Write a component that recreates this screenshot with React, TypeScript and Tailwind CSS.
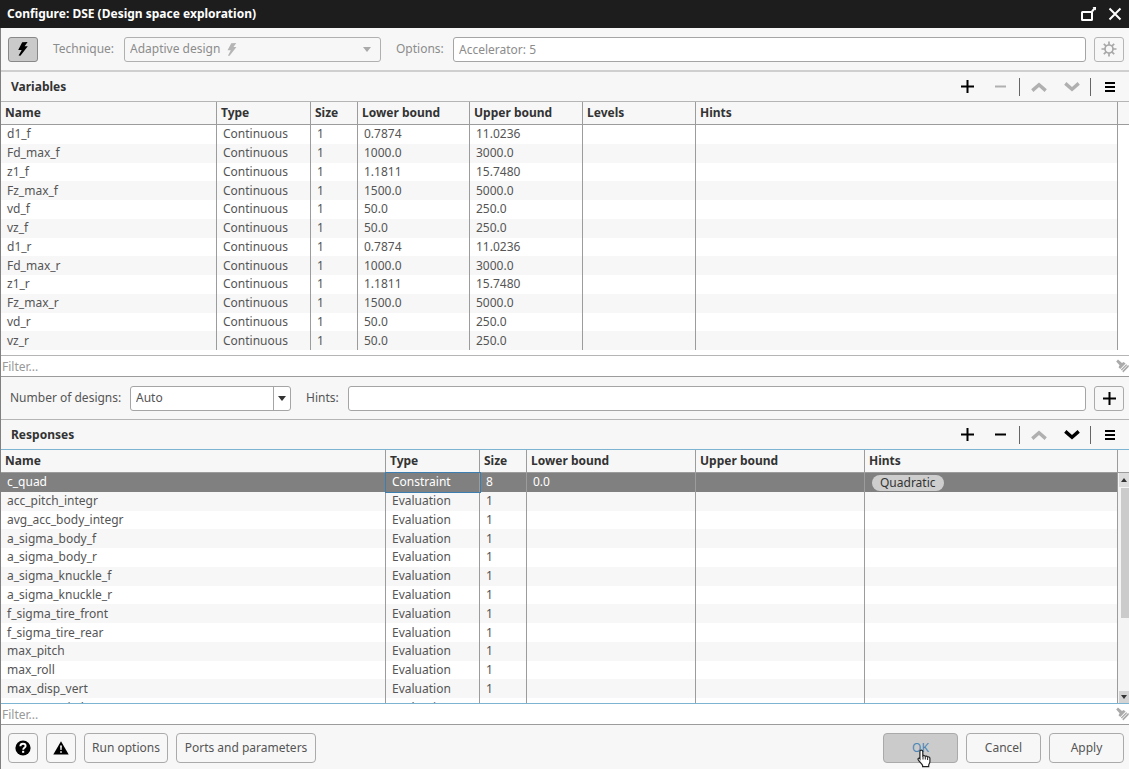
import type { ReactNode } from 'react'

type Hint = { label: string }

const variables = [
  ['d1_f', '0.7874', '11.0236'],
  ['Fd_max_f', '1000.0', '3000.0'],
  ['z1_f', '1.1811', '15.7480'],
  ['Fz_max_f', '1500.0', '5000.0'],
  ['vd_f', '50.0', '250.0'],
  ['vz_f', '50.0', '250.0'],
  ['d1_r', '0.7874', '11.0236'],
  ['Fd_max_r', '1000.0', '3000.0'],
  ['z1_r', '1.1811', '15.7480'],
  ['Fz_max_r', '1500.0', '5000.0'],
  ['vd_r', '50.0', '250.0'],
  ['vz_r', '50.0', '250.0'],
]

const evaluations = [
  'acc_pitch_integr',
  'avg_acc_body_integr',
  'a_sigma_body_f',
  'a_sigma_body_r',
  'a_sigma_knuckle_f',
  'a_sigma_knuckle_r',
  'f_sigma_tire_front',
  'f_sigma_tire_rear',
  'max_pitch',
  'max_roll',
  'max_disp_vert',
  'max_acc_pitch',
]

function Bolt({ className }: { className: string }) {
  return (
    <svg viewBox="0 0 12 14" className={className} fill="currentColor" aria-hidden="true">
      <path d="M5.2 0.3 10.6 0 7.6 4.2 10.8 4.2 3.4 13.8 1.6 13.6 4.7 7.9 1.2 7.9Z" />
    </svg>
  )
}

function Plus() {
  return (
    <svg viewBox="0 0 13 13" className="size-[13px]" fill="currentColor" aria-hidden="true">
      <path d="M5.5 0h2v5.5H13v2H7.5V13h-2V7.5H0v-2h5.5z" />
    </svg>
  )
}

function Minus() {
  return (
    <svg viewBox="0 0 13 13" className="size-[13px]" fill="currentColor" aria-hidden="true">
      <path d="M1 5.5h11v2H1z" />
    </svg>
  )
}

function Chevron({ up = false }: { up?: boolean }) {
  return (
    <svg viewBox="0 0 16 12" className="h-3 w-4" fill="none" stroke="currentColor" strokeWidth="3.4" aria-hidden="true">
      <path d={up ? 'M1.3 9.6 8 3.7l6.7 5.9' : 'M1.3 2.4 8 8.3l6.7-5.9'} />
    </svg>
  )
}

function Menu() {
  return (
    <svg viewBox="0 0 10 10" className="size-2.5" fill="currentColor" aria-hidden="true">
      <path d="M0 0h10v2H0zM0 4h10v2H0zM0 8h10v2H0z" />
    </svg>
  )
}

function Brush() {
  return (
    <svg viewBox="0 0 13 14" className="h-3.5 w-[13px] text-[#aaa]" fill="currentColor" aria-hidden="true">
      <path d="M0.2 2.4 2 0.6 6 4 7.6 2.9 9.6 4.6 4.3 10 2.5 8.2 3.6 6.3Z" />
      <path d="M10.2 5.2 11.2 6.1 5.8 11.5 4.9 10.6ZM11.8 6.3 13 6.6 12.6 8 7.2 13.6 6.3 12Z" />
    </svg>
  )
}

function SectionHeader({ title, enabled = false }: { title: string; enabled?: boolean }) {
  const tone = enabled ? 'text-black' : 'text-[#b0b0b0]'
  const button = 'flex h-7 w-[33px] items-center justify-center'
  return (
    <div className="flex h-[29px] items-center pr-0.5">
      <h2 className="flex-1 pl-2.5 font-bold text-[#333]">{title}</h2>
      <button type="button" aria-label={`Add to ${title}`} className={`${button} text-black`}><Plus /></button>
      <button type="button" aria-label={`Remove from ${title}`} className={`${button} ${tone}`}><Minus /></button>
      <span className="mx-0.5 h-[18px] w-px bg-[#666]" />
      <button type="button" aria-label="Move up" className={`${button} text-[#b0b0b0]`}><Chevron up /></button>
      <button type="button" aria-label="Move down" className={`${button} ${tone}`}><Chevron /></button>
      <span className="mx-0.5 h-[18px] w-px bg-[#666]" />
      <button type="button" aria-label={`${title} menu`} className="flex h-7 w-[34px] items-center justify-center text-black"><Menu /></button>
    </div>
  )
}

function HeadCell({ children }: { children: ReactNode }) {
  return (
    <th className="h-[23px] border-r border-b border-[#9c9c9c] bg-[#f7f7f7] px-1 py-0 text-left font-bold text-[#333]">
      {children}
    </th>
  )
}

function Cell({ children, focused = false }: { children?: ReactNode; focused?: boolean }) {
  return (
    <td className={`border-r border-[#9c9c9c] px-1.5 py-0 ${focused ? 'relative z-10 outline outline-[#3d7eb0]' : ''}`}>{children}</td>
  )
}

function HintPill({ label }: Hint) {
  return (
    <span className="ml-px inline-block rounded-full bg-[#cecece] px-2 align-middle leading-4 text-[#333]">{label}</span>
  )
}

function Filter({ label }: { label: string }) {
  return (
    <div className="flex h-[21px] items-center border-b border-[#9c9c9c] bg-white">
      <input aria-label={label} placeholder="Filter..." className="h-5 min-w-0 flex-1 px-px outline-none placeholder:text-[#999]" />
      <button type="button" aria-label={`Clear ${label}`}><Brush /></button>
    </div>
  )
}

function ScrollBar() {
  return (
    <div className="flex flex-1 flex-col items-end bg-[#f4f4f4]">
      <div className="flex h-[14px] w-2.5 items-center justify-center bg-[#dcdcdc]">
        <svg viewBox="0 0 6 4" className="h-1 w-1.5"><path d="M0 4 3 0l3 4z" fill="#333" /></svg>
      </div>
      <div className="mt-px h-[130px] w-2 bg-[#cbcbcb]" />
      <div className="flex-1" />
      <div className="flex h-3 w-2.5 items-center justify-center bg-[#d4d4d4]">
        <svg viewBox="0 0 6 4" className="h-1 w-1.5"><path d="M0 0h6L3 4z" fill="#333" /></svg>
      </div>
    </div>
  )
}

function FooterButton({ children, className }: { children: ReactNode; className: string }) {
  return (
    <button type="button" className={`flex h-[30px] items-center justify-center rounded border border-[#aaa] ${className}`}>
      {children}
    </button>
  )
}

const field = 'h-[25px] rounded-[3px] border border-[#a5a5a5] bg-white px-[5px]'
const iconButton = 'flex h-[25px] w-[30px] items-center justify-center rounded-[3px] border'

export default function App() {
  return (
    <main className="flex min-h-screen flex-col bg-[#f7f7f7] font-['Noto_Sans','Open_Sans',sans-serif] text-[12px] leading-[18px] text-[#555]">
      <header className="flex h-7 items-center bg-[#1d1d1d] pr-[7px] pl-[7px] text-white">
        <h1 className="flex-1 font-bold">Configure: DSE (Design space exploration)</h1>
        <button type="button" aria-label="Maximize" className="mr-[11px]">
          <svg viewBox="0 0 16 16" className="size-4" fill="none" stroke="currentColor" strokeWidth="2">
            <rect x="1" y="6" width="10" height="8" rx="0.5" />
            <path d="M11 5.5 13.5 2.500" />
            <path d="M11.500 1H15v3.500z" fill="currentColor" stroke="none" />
          </svg>
        </button>
        <button type="button" aria-label="Close">
          <svg viewBox="0 0 14 14" className="size-3.5" fill="none" stroke="currentColor" strokeWidth="2">
            <path d="m1.500 1.500 11 11M12.500 1.500l-11 11" />
          </svg>
        </button>
      </header>

      <div className="flex flex-1 flex-col border-l border-[#808080]">
        {/* Technique */}
        <div className="flex h-11 items-center border-b-2 border-[#cfcfcf] pr-[5px] pl-[7px] text-[#8c8c8c]">
          <button type="button" aria-label="Accelerated" aria-pressed="true" className={`${iconButton} border-[#888] bg-[#cacaca] text-black`}>
            <Bolt className="h-3.5 w-3" />
          </button>
          <label htmlFor="technique" className="w-[86px] pl-[15px]">Technique:</label>
          <div className="relative w-[257px]">
            <select id="technique" disabled className="h-[25px] w-full appearance-none rounded-[3px] border border-[#b0b0b0] px-[5px]">
              <option>Adaptive design</option>
            </select>
            <Bolt className="pointer-events-none absolute top-1.5 left-[102px] h-[13px] w-3 text-[#b5b5b5]" />
            <svg viewBox="0 0 8 5" className="pointer-events-none absolute top-2.5 right-2.5 h-[5px] w-2"><path d="M0 0h8L4 5z" fill="#aaa" /></svg>
          </div>
          <label htmlFor="options" className="w-[72px] pl-[15px]">Options:</label>
          <input id="options" defaultValue="Accelerator: 5" className={`${field} min-w-0 flex-1`} />
          <button type="button" aria-label="Option settings" className={`${iconButton} ml-2 border-[#b5b5b5] text-[#a8a8a8]`}>
            <svg viewBox="0 0 16 16" className="size-4" fill="none" stroke="currentColor" strokeWidth="1.7">
              <circle cx="8" cy="8" r="4" />
              <path d="M8 .5V4M8 12v3.5M.5 8H4M12 8h3.5M2.8 2.8l2.4 2.4M10.8 10.8l2.4 2.4M2.8 13.2l2.4-2.4M10.8 5.2l2.4-2.4" />
            </svg>
          </button>
        </div>

        {/* Variables */}
        <SectionHeader title="Variables" />
        <div className="flex h-[255px] overflow-hidden border-y border-[#b5b5b5] bg-white">
          <table className="h-[248px] w-full table-fixed border-separate border-spacing-0">
            <colgroup>
              <col className="w-[216px]" />
              <col className="w-[94px]" />
              <col className="w-[47px]" />
              <col className="w-[112px]" />
              <col className="w-[113px]" />
              <col className="w-[113px]" />
              <col />
            </colgroup>
            <thead>
              <tr>
                {['Name', 'Type', 'Size', 'Lower bound', 'Upper bound', 'Levels', 'Hints'].map((h) => (
                  <HeadCell key={h}>{h}</HeadCell>
                ))}
              </tr>
            </thead>
            <tbody>
              {variables.map(([name, lower, upper]) => (
                <tr key={name} className="even:bg-[#f7f7f7]">
                  <Cell>{name}</Cell>
                  <Cell>Continuous</Cell>
                  <Cell>1</Cell>
                  <Cell>{lower}</Cell>
                  <Cell>{upper}</Cell>
                  <Cell />
                  <Cell />
                </tr>
              ))}
            </tbody>
          </table>
          <div className="w-[11px] shrink-0">
            <div className="h-[23px] border-b border-[#9c9c9c] bg-[#f7f7f7]" />
          </div>
        </div>
        <Filter label="Filter variables" />

        {/* Design count */}
        <div className="flex h-[43px] items-center border-b border-[#b5b5b5] pr-[5px] pl-[9px]">
          <label htmlFor="designs" className="w-[120px]">Number of designs:</label>
          <div className="relative w-[161px]">
            <select id="designs" className="h-[25px] w-full appearance-none rounded-[3px] border border-[#a5a5a5] bg-white px-[5px]">
              <option>Auto</option>
            </select>
            <span className="pointer-events-none absolute inset-y-px right-px flex w-[17px] items-center justify-center border-l border-[#a5a5a5]">
              <svg viewBox="0 0 8 5" className="h-[5px] w-2"><path d="M0 0h8L4 5z" fill="#333" /></svg>
            </span>
          </div>
          <label htmlFor="hints" className="w-[57px] pl-[15px]">Hints:</label>
          <input id="hints" className={`${field} min-w-0 flex-1`} />
          <button type="button" aria-label="Add hint" className={`${iconButton} ml-2 border-[#aaa] text-black`}><Plus /></button>
        </div>

        {/* Responses */}
        <SectionHeader title="Responses" enabled />
        <div className="flex h-[255px] overflow-hidden border-y border-[#7db4d2] bg-white">
          <table className="h-[267px] w-full table-fixed border-separate border-spacing-0">
            <colgroup>
              <col className="w-[385px]" />
              <col className="w-[94px]" />
              <col className="w-[47px]" />
              <col className="w-[169px]" />
              <col className="w-[169px]" />
              <col />
            </colgroup>
            <thead>
              <tr>
                {['Name', 'Type', 'Size', 'Lower bound', 'Upper bound', 'Hints'].map((h) => (
                  <HeadCell key={h}>{h}</HeadCell>
                ))}
              </tr>
            </thead>
            <tbody>
              <tr className="bg-[#808080] text-white">
                <Cell>c_quad</Cell>
                <Cell focused>Constraint</Cell>
                <Cell>8</Cell>
                <Cell>0.0</Cell>
                <Cell />
                <Cell><HintPill label="Quadratic" /></Cell>
              </tr>
              {evaluations.map((name) => (
                <tr key={name} className="even:bg-[#f7f7f7]">
                  <Cell>{name}</Cell>
                  <Cell>Evaluation</Cell>
                  <Cell>1</Cell>
                  <Cell />
                  <Cell />
                  <Cell />
                </tr>
              ))}
            </tbody>
          </table>
          <div className="flex w-[11px] shrink-0 flex-col">
            <div className="h-[23px] border-b border-[#9c9c9c] bg-[#f7f7f7]" />
            <ScrollBar />
          </div>
        </div>
        <Filter label="Filter responses" />

        {/* Actions */}
        <footer className="flex items-start gap-2 pt-2 pr-[5px] pl-[7px]">
          <FooterButton className="w-[30px] text-black">
            <svg viewBox="0 0 16 16" className="size-4" role="img" aria-label="Help">
              <circle cx="8" cy="8" r="7.6" fill="currentColor" />
              <path d="M5.3 6.3C5.4 4.6 6.5 3.7 8 3.7s2.6 1 2.6 2.3c0 1.8-2.4 1.8-2.4 3.7" fill="none" stroke="#fff" strokeWidth="1.9" />
              <path d="M7.1 10.8h2.1v2H7.1z" fill="#fff" />
            </svg>
          </FooterButton>
          <FooterButton className="w-[30px] text-black">
            <svg viewBox="0 0 16 14" className="h-3.5 w-4" role="img" aria-label="Warnings">
              <path d="M8 .3 15.7 13.5H.3z" fill="currentColor" />
              <path d="M7.1 4.5h1.8L8.6 9H7.4zM7.2 10.2h1.6v1.6H7.2z" fill="#fff" />
            </svg>
          </FooterButton>
          <FooterButton className="w-[84px]">Run options</FooterButton>
          <FooterButton className="w-[140px]">Ports and parameters</FooterButton>
          <div className="flex-1" />
          <div className="relative">
            <FooterButton className="w-[75px] bg-[#cbcbcb] text-[#4a86b8]">OK</FooterButton>
            <svg viewBox="0 0 15 19" className="pointer-events-none absolute top-4 left-[34px] h-[19px] w-[15px]" aria-hidden="true">
              <path
                d="M4.2 1.2c1.2 0 1.6.7 1.6 1.6v4c.8-.6 2-.4 2.4.5.8-.5 2-.2 2.3.7 1-.4 2.4.1 2.4 1.5v3.2c0 1.7-1.2 2.4-1.2 3.6v1.4H5.6v-1.3C5 15 1.8 12.4 1.1 10.5c-.4-1.3 1.1-1.9 1.8-.8V2.8c0-.9.4-1.6 1.3-1.6Z"
                fill="#fff"
                stroke="#222"
                strokeWidth="1.2"
              />
              <path d="M6 7v3.5M8.3 7.5v3M10.6 8.3V11" stroke="#222" />
            </svg>
          </div>
          <FooterButton className="w-[75px]">Cancel</FooterButton>
          <FooterButton className="w-[75px]">Apply</FooterButton>
        </footer>
      </div>
    </main>
  )
}
